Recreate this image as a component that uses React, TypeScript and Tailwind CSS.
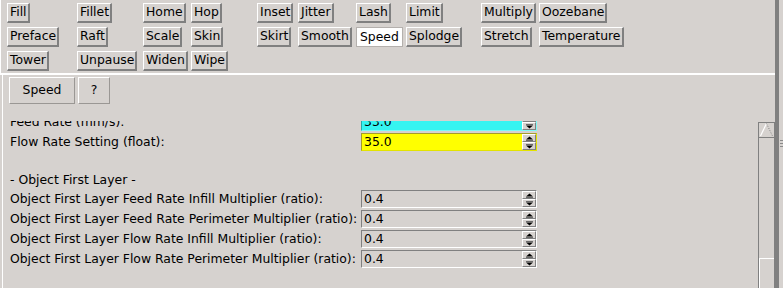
const gridRows = [
  ["Fill", "Fillet", "Home", "Hop", "Inset", "Jitter", "Lash", "Limit", "Multiply", "Oozebane"],
  ["Preface", "Raft", "Scale", "Skin", "Skirt", "Smooth", "Speed", "Splodge", "Stretch", "Temperature"],
  ["Tower", "Unpause", "Widen", "Wipe"],
];

const firstLayer = [
  "Object First Layer Feed Rate Infill Multiplier (ratio):",
  "Object First Layer Feed Rate Perimeter Multiplier (ratio):",
  "Object First Layer Flow Rate Infill Multiplier (ratio):",
  "Object First Layer Flow Rate Perimeter Multiplier (ratio):",
];

function ToolButton({ label, selected }: { label: string; selected?: boolean }) {
  if (selected) {
    return (
      <div className="justify-self-start h-[20px] flex items-center px-[3px] bg-white border border-[#b4b0ad]">
        {label}
      </div>
    );
  }

  return (
    <div className="justify-self-start h-[20px] flex items-center pl-[2px] pr-[1px] border-t border-l border-r-2 border-b-2 border-t-white border-l-white border-r-[#808080] border-b-[#808080]">
      {label}
    </div>
  );
}

function Arrow({ up }: { up?: boolean }) {
  return (
    <div className="flex-1 flex items-center justify-center border-t border-l border-r border-b border-t-white border-l-white border-r-[#808080] border-b-[#808080] bg-[#d6d2cf]">
      <svg width="9" height="5" viewBox="0 0 9 5">
        {up ? (
          <>
            <path d="M1 3.5 L4.5 0.5 L8 3.5 Z" fill="#000" />
            <path d="M1 4.5 H8" stroke="#6a6a6a" strokeWidth="1" />
          </>
        ) : (
          <>
            <path d="M1 0.5 H8" stroke="#6a6a6a" strokeWidth="1" />
            <path d="M1 1.5 L4.5 4.5 L8 1.5 Z" fill="#000" />
          </>
        )}
      </svg>
    </div>
  );
}

function SpinBox({ value, bg }: { value: string; bg?: string }) {
  const fill = bg ?? "bg-[#d6d2cf] border-t-[#808080] border-l-[#808080] border-r-white border-b-white";
  return (
    <div className={`w-[176px] h-[18px] flex items-center border ${fill}`}>
      <span className="flex-1 pl-[2px] leading-none">{value}</span>
      <div className="w-[14px] h-full flex flex-col">
        <Arrow up />
        <Arrow />
      </div>
    </div>
  );
}

function FieldRow({ label, children }: { label: string; children: React.ReactNode }) {
  return (
    <div className="flex h-[20px]">
      <div className="w-[351px] h-[18px] flex items-center whitespace-nowrap">{label}</div>
      {children}
    </div>
  );
}

function ScrollBar() {
  return (
    <div className="w-[17px] mt-[1px] flex flex-col">
      <div className="h-[16px] border border-[#808080]">
        <svg width="15" height="14" viewBox="0 0 15 14">
          <path d="M1.5 13 L7.5 0.5" stroke="#ffffff" strokeWidth="1.2" />
          <path d="M7.5 0.5 L13.5 13" stroke="#808080" strokeWidth="1" strokeDasharray="1 1.5" />
        </svg>
      </div>
      <div className="flex-1 border-l border-r border-[#808080] flex flex-col">
        <div className="mt-[120px] flex-1 border-t border-l border-white" />
      </div>
    </div>
  );
}

export default function App() {
  return (
    <div className="w-[783px] h-[288px] overflow-hidden flex bg-[#d6d2cf] text-[12.4px] text-black font-['DejaVu_Sans',sans-serif]">
      <div className="w-[775px] flex flex-col">
        <div className="h-[73px] border-l border-white pl-[6px] pt-[3px]">
          <div className="grid grid-cols-[70px_66px_48px_66px_41px_58px_50px_75px_58px_auto] gap-y-[4px]">
            {gridRows.map((row, r) =>
              row.map((name) => (
                <ToolButton key={`${r}-${name}`} label={name} selected={r === 1 && name === "Speed"} />
              ))
            )}
          </div>
        </div>

        <div className="h-[2px] bg-white" />

        <div className="flex-1 min-h-0 ml-[2px] border-l border-white flex flex-col">
          <div className="flex gap-[3px] pl-[6px] pt-[2px]">
            <div className="w-[66px] h-[27px] flex items-center justify-center border border-t-white border-l-white border-r-[#9a9794] border-b-[#9a9794]">
              Speed
            </div>
            <div className="w-[32px] h-[27px] flex items-center justify-center border border-t-white border-l-white border-r-[#9a9794] border-b-[#9a9794]">
              ?
            </div>
          </div>

          <div className="flex flex-1 min-h-0 mt-[17px]">
            <div className="flex-1 overflow-hidden pl-[7px]">
              <div className="-mt-[8px] flex flex-col">
                <FieldRow label="Feed Rate (mm/s):">
                  <SpinBox value="33.0" bg="bg-[#36f4f1] border-[#2aa9a7] border-r-[#7ff8f6] border-b-[#7ff8f6]" />
                </FieldRow>
                <FieldRow label="Flow Rate Setting (float):">
                  <SpinBox value="35.0" bg="bg-[#ffff00] border-[#a39b2e] border-r-[#e3e300] border-b-[#e3e300]" />
                </FieldRow>
                <div className="h-[18px]" />
                <div className="h-[19px] flex items-center">- Object First Layer -</div>
                {firstLayer.map((label) => (
                  <FieldRow key={label} label={label}>
                    <SpinBox value="0.4" />
                  </FieldRow>
                ))}
              </div>
            </div>
            <ScrollBar />
          </div>
        </div>
      </div>

      <div className="w-[4px] bg-[#808080]" />

      <div className="w-[4px] flex flex-col gap-[2px] pt-[140px] pl-[1px]">
        <div className="h-px w-[3px] bg-[#8a8a8a]" />
        <div className="h-px w-[3px] bg-[#8a8a8a]" />
        <div className="h-px w-[3px] bg-[#8a8a8a]" />
      </div>
    </div>
  );
}
